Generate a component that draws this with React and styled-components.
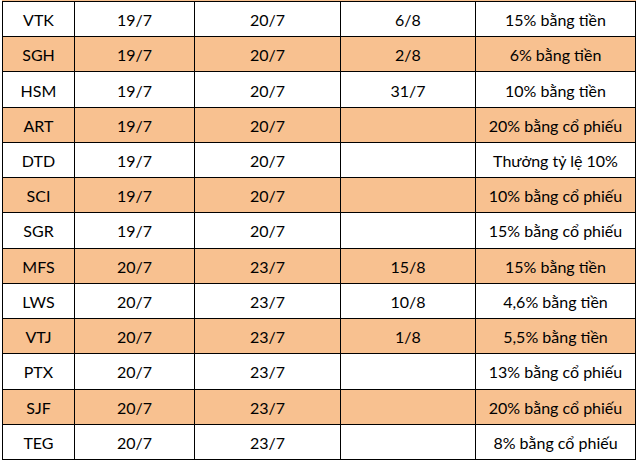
import React from "react";
import styled, { createGlobalStyle } from "styled-components";

const Global = createGlobalStyle`
  html, body { margin: 0; padding: 0; background: #ffffff; }
  body { font-family: Lato, Carlito, "Liberation Sans", sans-serif; }
`;

const ORANGE = "#f8c190";

const Page = styled.div`
  width: 638px;
  height: 462px;
  padding-left: 2px;
  box-sizing: border-box;
  display: flex;
  flex-direction: column;
`;

const TopStrip = styled.div`
  height: 1px;
  width: 634px;
  background: ${ORANGE};
`;

const Table = styled.div`
  display: grid;
  grid-template-columns: 71px 119px 145px 134px 159px;
  grid-template-rows: repeat(13, 1fr);
  gap: 1px;
  padding: 1px;
  width: 634px;
  height: 459px;
  box-sizing: border-box;
  background: #000;
`;

const Row = styled.div`
  display: contents;
`;

const Cell = styled.div`
  background: ${(p) => (p.$alt ? ORANGE : "#ffffff")};
  display: flex;
  align-items: center;
  justify-content: center;
  font-size: 16px;
  color: #000;
  white-space: nowrap;
  padding-top: 1px;
`;

const rows = [
  ["VTK", "19/7", "20/7", "6/8", "15% bằng tiền"],
  ["SGH", "19/7", "20/7", "2/8", "6% bằng tiền"],
  ["HSM", "19/7", "20/7", "31/7", "10% bằng tiền"],
  ["ART", "19/7", "20/7", "", "20% bằng cổ phiếu"],
  ["DTD", "19/7", "20/7", "", "Thưởng tỷ lệ 10%"],
  ["SCI", "19/7", "20/7", "", "10% bằng cổ phiếu"],
  ["SGR", "19/7", "20/7", "", "15% bằng cổ phiếu"],
  ["MFS", "20/7", "23/7", "15/8", "15% bằng tiền"],
  ["LWS", "20/7", "23/7", "10/8", "4,6% bằng tiền"],
  ["VTJ", "20/7", "23/7", "1/8", "5,5% bằng tiền"],
  ["PTX", "20/7", "23/7", "", "13% bằng cổ phiếu"],
  ["SJF", "20/7", "23/7", "", "20% bằng cổ phiếu"],
  ["TEG", "20/7", "23/7", "", "8% bằng cổ phiếu"],
];

export default function App() {
  return (
    <>
      <Global />
      <Page>
        <TopStrip />
        <Table>
          {rows.map((r, i) => (
            <Row key={i}>
              {r.map((c, j) => (
                <Cell key={j} $alt={i % 2 === 1}>
                  {c}
                </Cell>
              ))}
            </Row>
          ))}
        </Table>
      </Page>
    </>
  );
}
